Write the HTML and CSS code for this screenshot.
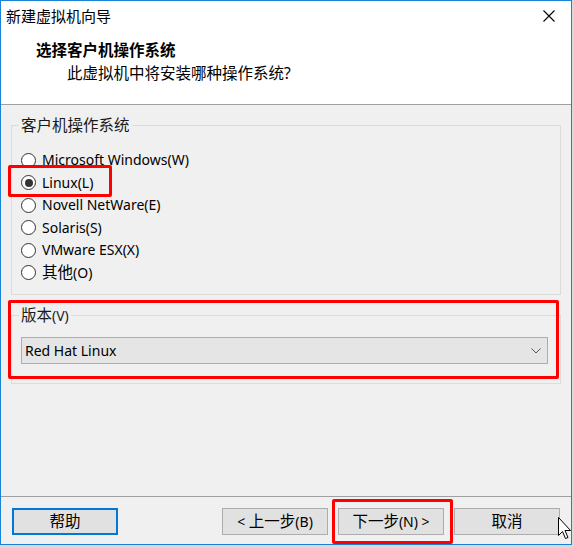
FILE: index.html
```html
<!DOCTYPE html>
<html lang="zh-CN">
<head>
<meta charset="utf-8">
<title>新建虚拟机向导</title>
<link rel="stylesheet" href="styles.css">
</head>
<body>
<div class="window">
  <div class="titlebar">
    <span class="title cjk">新建虚拟机向导</span>
    <span class="close">
      <svg width="12" height="12" viewBox="0 0 12 12"><path d="M0.5 0.5 L11.5 11.5 M11.5 0.5 L0.5 11.5" stroke="#000" stroke-width="1.1" fill="none"/></svg>
    </span>
  </div>
  <div class="header">
    <div class="heading cjk">选择客户机操作系统</div>
    <div class="subheading cjk">此虚拟机中将安装哪种操作系统?</div>
  </div>
  <div class="content">
    <fieldset class="group group-os">
      <legend class="cjk">客户机操作系统</legend>
      <div class="radio"><span class="dot"></span><span>Microsoft Windows(W)</span></div>
      <div class="radio"><span class="dot checked"></span><span>Linux(L)</span></div>
      <div class="radio"><span class="dot"></span><span>Novell NetWare(E)</span></div>
      <div class="radio"><span class="dot"></span><span>Solaris(S)</span></div>
      <div class="radio"><span class="dot"></span><span>VMware ESX(X)</span></div>
      <div class="radio"><span class="dot"></span><span><span class="cjk">其他</span>(O)</span></div>
    </fieldset>
    <fieldset class="group group-ver">
      <legend><span class="cjk">版本</span>(V)</legend>
      <div class="select">
        <span>Red Hat Linux</span>
        <svg width="10" height="6" viewBox="0 0 10 6"><path d="M0.5 0.5 L5 5 L9.5 0.5" stroke="#555" stroke-width="1" fill="none"/></svg>
      </div>
    </fieldset>
  </div>
  <div class="footer">
    <button class="btn btn-help"><span class="cjk">帮助</span></button>
    <span class="spacer"></span>
    <button class="btn">&lt; <span class="cjk">上一步</span>(B)</button>
    <button class="btn"><span class="cjk">下一步</span>(N) &gt;</button>
    <button class="btn"><span class="cjk">取消</span></button>
  </div>

  <div class="mark mark-linux"></div>
  <div class="mark mark-ver"></div>
  <div class="mark mark-next"></div>
  <svg class="cursor" width="14" height="24" viewBox="0 0 14 24">
    <path d="M0.5 0.5 L0.5 18.5 L4.5 14.5 L7.5 21.5 L10 20.5 L7 13.5 L12.5 13.5 Z" fill="#fff" stroke="#000" stroke-width="1"/>
  </svg>
</div>
</body>
</html>
```
FILE: styles.css
```css
* { box-sizing: border-box; }
html, body { margin: 0; padding: 0; }
body {
  width: 574px;
  height: 548px;
  background: #d9d9d9;
  font-family: "Noto Sans", "Noto Sans CJK SC", sans-serif;
  font-size: 14px;
  color: #000;
  overflow: hidden;
}
.cjk { font-size: 15.5px; }
.window {
  position: relative;
  width: 572px;
  height: 545px;
  border: 1px solid #1883d7;
  background: #f0f0f0;
  display: flex;
  flex-direction: column;
}
.titlebar {
  height: 29px;
  background: #fff;
  display: flex;
  align-items: center;
  justify-content: space-between;
  padding-left: 5px;
  padding-right: 16px;
}
.title { line-height: 20px; padding-top: 1px; font-size: 15px; }
.close { display: flex; width: 12px; height: 12px; }
.header {
  height: 75px;
  background: #fff;
  border-bottom: 1px solid #a0a0a0;
  padding: 9px 0 0 35px;
}
.heading { font-weight: bold; line-height: 22px; }
.subheading { line-height: 22px; padding-left: 31px; margin-top: 1px; }
.content {
  flex: 1;
  padding: 10px 10px 0 10px;
  display: flex;
  flex-direction: column;
}
.group {
  margin: 0;
  border: 1px solid #dcdcdc;
  padding: 0 0 0 9px;
}
.group legend {
  padding: 0 2px;
  margin-left: -2px;
  line-height: 20px;
  color: #1a1a1a;
}
.group-os { padding-top: 14px; padding-bottom: 10px; }
.radio {
  height: 22.5px;
  display: flex;
  align-items: center;
  gap: 6px;
  line-height: 20px;
}
.dot {
  width: 15px;
  height: 15px;
  border: 1px solid #333;
  border-radius: 50%;
  background: #fff;
  display: flex;
  align-items: center;
  justify-content: center;
  flex: none;
}
.dot.checked::after {
  content: "";
  width: 8px;
  height: 8px;
  border-radius: 50%;
  background: #333;
}
.group-ver {
  margin-top: 10px;
  padding-top: 11px;
  padding-bottom: 19px;
  padding-right: 12px;
}
.select {
  height: 27px;
  background: #e5e5e5;
  border: 1px solid #adadad;
  display: flex;
  align-items: center;
  justify-content: space-between;
  padding: 0 6px 0 3px;
  line-height: 20px;
}
.footer {
  height: 48px;
  border-top: 1px solid #a0a0a0;
  display: flex;
  align-items: flex-start;
  padding: 11px 11px 0 11px;
  gap: 10px;
}
.spacer { flex: 1; }
.btn {
  width: 106px;
  height: 27px;
  background: #e1e1e1;
  border: 1px solid #adadad;
  font: inherit;
  color: #000;
  padding: 0;
  line-height: 20px;
}
.btn-help { border: 2px solid #0078d7; }
.mark {
  position: absolute;
  border: 3px solid #f00;
  border-radius: 2px;
  pointer-events: none;
}
.mark-linux { left: 7px; top: 164px; width: 104px; height: 32px; }
.mark-ver { left: 7px; top: 299px; width: 551px; height: 79px; }
.mark-next { left: 331px; top: 498px; width: 121px; height: 45px; }
.cursor { position: absolute; left: 557px; top: 516px; }
```
